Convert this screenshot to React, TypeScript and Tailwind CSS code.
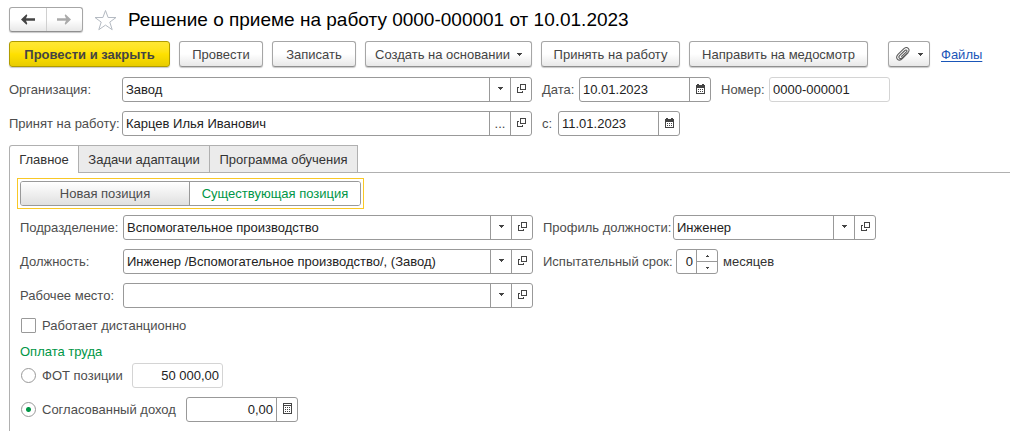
import { useState, type ReactNode } from 'react';

function Caret({ up = false, small = false }: { up?: boolean; small?: boolean }) {
  if (small) {
    return (
      <svg width="3" height="2" viewBox="0 0 3 2" shapeRendering="crispEdges" fill="#444" aria-hidden="true">
        <path d={up ? 'M1 0h1v1h1v1H0V1h1z' : 'M0 0h3v1H2v1H1V1H0z'} />
      </svg>
    );
  }
  return (
    <svg width="5" height="3" viewBox="0 0 5 3" shapeRendering="crispEdges" fill="#444" aria-hidden="true">
      <path d="M0 0h5v1H4v1H3v1H2V2H1V1H0z" />
    </svg>
  );
}

function OpenIcon() {
  return (
    <svg width="9" height="9" viewBox="0 0 9 9" shapeRendering="crispEdges" fill="none" stroke="#444" aria-hidden="true">
      <path d="M3.5 0.5h5v5h-5z" />
      <path d="M2 3.5H0.5v5h5V7" />
    </svg>
  );
}

function CalendarIcon() {
  return (
    <svg width="9" height="10" viewBox="0 0 9 10" shapeRendering="crispEdges" fill="#444" aria-hidden="true">
      <path d="M0 1h1V0h2v1h3V0h2v1h1v9H0zM1 4v5h7V4z" fillRule="evenodd" />
      <path d="M2 5h1v1H2zM4 5h1v1H4zM6 5h1v1H6zM2 7h1v1H2zM4 7h1v1H4zM6 7h1v1H6z" />
    </svg>
  );
}

function CalculatorIcon() {
  return (
    <svg width="9" height="11" viewBox="0 0 9 11" shapeRendering="crispEdges" fill="#444" aria-hidden="true">
      <path d="M0 0h9v11H0zM1 1v1h7V1zM1 3v7h7V3z" fillRule="evenodd" />
      <path d="M2 4h1v1H2zM4 4h1v1H4zM6 4h1v1H6zM2 6h1v1H2zM4 6h1v1H4zM6 6h1v1H6zM2 8h1v1H2zM4 8h1v1H4zM6 8h1v1H6z" />
    </svg>
  );
}

function ArrowIcon({ right = false }: { right?: boolean }) {
  return (
    <svg width="14" height="11" viewBox="0 0 14 11" fill="currentColor" aria-hidden="true">
      <path d={right ? 'M14 5.5 8.500 0.300 7.700 1.500 9 4.200H0v2.600h9L7.700 9.500 8.500 10.700z' : 'M0 5.5 5.500 0.300 6.300 1.500 5 4.200H14v2.600H5L6.300 9.500 5.500 10.700z'} />
    </svg>
  );
}

function ClipIcon() {
  return (
    <svg width="14" height="14" viewBox="0 0 14 14" fill="none" stroke="#5c5c5c" strokeWidth="1.1" strokeLinecap="round" aria-hidden="true">
      <path d="M12 5.800 6.600 11.400C5 13.100 2.900 13.600 1.500 12.300.1 11 .4 9 2 7.300L7.900 1.700C9.200.5 11 .3 12.200 1.300c1.200 1 1.100 2.800-.1 4L6.400 10.700c-1 1-2.200 1.200-3 .5-.8-.8-.6-1.900.4-2.900L8.900 3.500c.6-.6 1.300-.7 1.700-.3.5.5.4 1.100-.2 1.700L5.600 9.400" />
    </svg>
  );
}

const RAISED =
  'border border-[#a6a6a6] border-b-[#8f8f8f] bg-linear-to-b from-white from-50% to-[#e8e8e8] shadow-[0_1px_1px_#c8c8c8] text-[#444]';

function ToolButton({ children, className }: { children: ReactNode; className: string }) {
  return (
    <button type="button" className={`flex h-[26px] items-center justify-center rounded-[3px] whitespace-nowrap ${RAISED} ${className}`}>
      {children}
    </button>
  );
}

type Adornment = 'list' | 'more' | 'open' | 'date' | 'calc';

const ADORNMENTS: Record<Adornment, { label: string; icon: ReactNode }> = {
  list: { label: 'Выбрать из списка', icon: <Caret /> },
  more: { label: 'Выбрать', icon: '...' },
  open: { label: 'Открыть', icon: <OpenIcon /> },
  date: { label: 'Календарь', icon: <CalendarIcon /> },
  calc: { label: 'Калькулятор', icon: <CalculatorIcon /> },
};

function Field({
  id,
  label,
  value,
  actions = [],
  className,
  numeric = false,
  readOnly = false,
}: {
  id: string;
  label?: string;
  value: string;
  actions?: Adornment[];
  className: string;
  numeric?: boolean;
  readOnly?: boolean;
}) {
  return (
    <div className={`flex h-[25px] min-w-0 overflow-hidden rounded-[3px] border bg-white ${readOnly ? 'border-[#d4d4d4]' : 'border-[#999]'} ${className}`}>
      <input
        id={id}
        aria-label={label}
        defaultValue={value}
        readOnly={readOnly}
        className={`w-full min-w-0 flex-1 px-[3px] text-[#222] outline-none ${numeric ? 'text-right' : ''}`}
      />
      {actions.map((a) => (
        <button
          key={a}
          type="button"
          aria-label={ADORNMENTS[a].label}
          className={`flex w-[21px] shrink-0 items-center justify-center border-l border-[#999] text-[#444] ${a === 'more' ? '' : 'pb-[2px]'}`}
        >
          {ADORNMENTS[a].icon}
        </button>
      ))}
    </div>
  );
}

function Label({ id, children, className = '' }: { id: string; children: ReactNode; className?: string }) {
  return (
    <label htmlFor={id} className={`shrink-0 whitespace-nowrap text-[#4d4d4d] ${className}`}>
      {children}
    </label>
  );
}

const TABS = [
  { name: 'Главное', width: 'w-[70px]' },
  { name: 'Задачи адаптации', width: 'w-[131px]' },
  { name: 'Программа обучения', width: 'w-[148px]' },
];

const MODES = [
  { name: 'Новая позиция', width: 'w-[168px]' },
  { name: 'Существующая позиция', width: 'flex-1' },
];

const CHOICE = 'size-[15px] shrink-0 appearance-none border border-[#999] bg-white';

export default function App() {
  const [tab, setTab] = useState(0);
  const [mode, setMode] = useState(1);

  return (
    <main className="min-h-screen bg-white pt-[7px] pl-[9px] font-['Liberation_Sans',Arial,sans-serif] text-[13px] leading-[15px]">
      <header className="flex h-[25px] items-center">
        <div className={`flex h-[25px] w-[74px] shrink-0 rounded-[3px] ${RAISED}`}>
          <button type="button" aria-label="Назад" className="flex flex-1 items-center justify-center border-r border-[#d0d0d0]">
            <ArrowIcon />
          </button>
          <button type="button" aria-label="Вперед" className="flex flex-1 items-center justify-center text-[#aaa]">
            <ArrowIcon right />
          </button>
        </div>
        <button type="button" aria-label="В избранное" className="ml-[11px] shrink-0">
          <svg width="23" height="22" viewBox="0 0 23 22" fill="white" stroke="#b4bac2" aria-hidden="true">
            <path d="M11.500 1.500 14.100 8.500H22L15.800 13.100 18.200 20.700 11.500 16.100 4.800 20.700 7.200 13.100 1 8.500H8.900z" />
          </svg>
        </button>
        <h1 className="ml-[11px] text-[19px] leading-6 whitespace-nowrap text-black">Решение о приеме на работу 0000-000001 от 10.01.2023</h1>
      </header>

      <div className="mt-[9px] flex items-center gap-[9px]">
        <button
          type="button"
          className="flex h-[26px] w-[161px] items-center justify-center rounded-[3px] border border-[#b09c00] bg-linear-to-b from-[#ffe834] via-[#ffe100] to-[#e8cc00] font-bold whitespace-nowrap text-[#444] shadow-[0_1px_1px_#c8c8c8]"
        >
          Провести и закрыть
        </button>
        <ToolButton className="w-[84px]">Провести</ToolButton>
        <ToolButton className="w-[84px]">Записать</ToolButton>
        <ToolButton className="w-[167px] gap-[7px]">
          Создать на основании
          <Caret />
        </ToolButton>
        <ToolButton className="w-[139px]">Принять на работу</ToolButton>
        <ToolButton className="w-[179px]">Направить на медосмотр</ToolButton>
        <ToolButton className="ml-[11px] w-[42px] gap-2">
          <ClipIcon />
          <Caret />
        </ToolButton>
        <a href="#files" className="ml-[2px] text-[#1a56b8] underline underline-offset-2">
          Файлы
        </a>
      </div>

      <div className="mt-[10px] flex items-center">
        <Label id="org" className="w-[113px]">Организация:</Label>
        <Field id="org" value="Завод" actions={['list', 'open']} className="basis-[410px]" />
        <Label id="date" className="ml-[10px] w-[37px]">Дата:</Label>
        <Field id="date" value="10.01.2023" actions={['date']} className="basis-[132px]" />
        <Label id="number" className="ml-[10px] w-[48px]">Номер:</Label>
        <Field id="number" value="0000-000001" readOnly className="basis-[121px]" />
      </div>

      <div className="mt-[9px] flex items-center">
        <Label id="person" className="w-[113px]">Принят на работу:</Label>
        <Field id="person" value="Карцев Илья Иванович" actions={['more', 'open']} className="basis-[410px]" />
        <Label id="from" className="ml-[10px] w-[16px]">с:</Label>
        <Field id="from" value="11.01.2023" actions={['date']} className="basis-[122px]" />
      </div>

      <div className="mt-[9px] flex items-stretch" role="tablist">
        {TABS.map((t, i) => (
          <button
            key={t.name}
            type="button"
            role="tab"
            aria-selected={tab === i}
            onClick={() => setTab(i)}
            className={`h-[28px] border-t border-r border-[#b0b0b0] whitespace-nowrap text-[#333] first:rounded-tl-[3px] first:border-l ${t.width} ${
              tab === i ? 'bg-white' : 'border-b bg-[#ebebeb]'
            }`}
          >
            {t.name}
          </button>
        ))}
        <div className="flex-1 border-b border-[#b0b0b0]" role="presentation" />
      </div>

      <section className="border-l border-[#b0b0b0] pt-[5px] pb-[9px] pl-[7px]">
        <div className="flex h-[31px] w-[347px] border border-[#f9c826] p-[2px]">
          <div className="flex flex-1 overflow-hidden rounded-[3px] border border-[#999]" role="group">
            {MODES.map((m, i) => (
              <button
                key={m.name}
                type="button"
                aria-pressed={mode === i}
                onClick={() => setMode(i)}
                className={`whitespace-nowrap not-first:border-l not-first:border-[#999] ${m.width} ${
                  mode === i ? 'bg-white text-[#009646]' : 'bg-linear-to-b from-white to-[#e0e0e0] text-[#4d4d4d]'
                }`}
              >
                {m.name}
              </button>
            ))}
          </div>
        </div>

        <div className="pl-[3px]">
          <div className="mt-[6px] flex items-center">
            <Label id="dept" className="w-[103px]">Подразделение:</Label>
            <Field id="dept" value="Вспомогательное производство" actions={['list', 'open']} className="basis-[410px]" />
            <Label id="profile" className="ml-[10px] w-[130px]">Профиль должности:</Label>
            <Field id="profile" value="Инженер" actions={['list', 'open']} className="basis-[203px]" />
          </div>

          <div className="mt-[9px] flex items-center">
            <Label id="post" className="w-[103px]">Должность:</Label>
            <Field id="post" value="Инженер /Вспомогательное производство/, (Завод)" actions={['list', 'open']} className="basis-[410px]" />
            <Label id="probation" className="ml-[10px] w-[133px]">Испытательный срок:</Label>
            <div className="flex h-[25px] w-[42px] shrink-0 overflow-hidden rounded-[3px] border border-[#999]">
              <input id="probation" defaultValue="0" className="w-full min-w-0 flex-1 px-[3px] text-right text-[#222] outline-none" />
              <div className="flex w-[21px] shrink-0 flex-col border-l border-[#999]">
                <button type="button" aria-label="Больше" className="flex flex-1 items-center justify-center border-b border-[#999]">
                  <Caret small up />
                </button>
                <button type="button" aria-label="Меньше" className="flex flex-1 items-center justify-center">
                  <Caret small />
                </button>
              </div>
            </div>
            <span className="ml-[5px] text-[#333]">месяцев</span>
          </div>

          <div className="mt-[9px] flex items-center">
            <Label id="place" className="w-[103px]">Рабочее место:</Label>
            <Field id="place" value="" actions={['list', 'open']} className="basis-[410px]" />
          </div>

          <div className="mt-[10px] flex items-center gap-[6px] pl-px">
            <input id="remote" type="checkbox" className={`${CHOICE} rounded-[1px] checked:bg-[#009646]`} />
            <Label id="remote">Работает дистанционно</Label>
          </div>

          <h2 className="mt-[11px] text-[#009646]">Оплата труда</h2>

          <div className="mt-[4px] flex items-center pl-px">
            <input id="payroll" type="radio" name="pay" className={`${CHOICE} rounded-full checked:bg-[radial-gradient(#009646_2px,white_3px)]`} />
            <Label id="payroll" className="ml-[6px] w-[90px]">ФОТ позиции</Label>
            <Field id="payroll-sum" label="ФОТ позиции" value="50 000,00" numeric readOnly className="basis-[91px]" />
          </div>

          <div className="mt-[9px] flex items-center pl-px">
            <input id="agreed" type="radio" name="pay" defaultChecked className={`${CHOICE} rounded-full checked:bg-[radial-gradient(#009646_2px,white_3px)]`} />
            <Label id="agreed" className="ml-[6px] w-[144px]">Согласованный доход</Label>
            <Field id="agreed-sum" label="Согласованный доход" value="0,00" numeric actions={['calc']} className="basis-[112px]" />
          </div>
        </div>
      </section>
    </main>
  );
}
